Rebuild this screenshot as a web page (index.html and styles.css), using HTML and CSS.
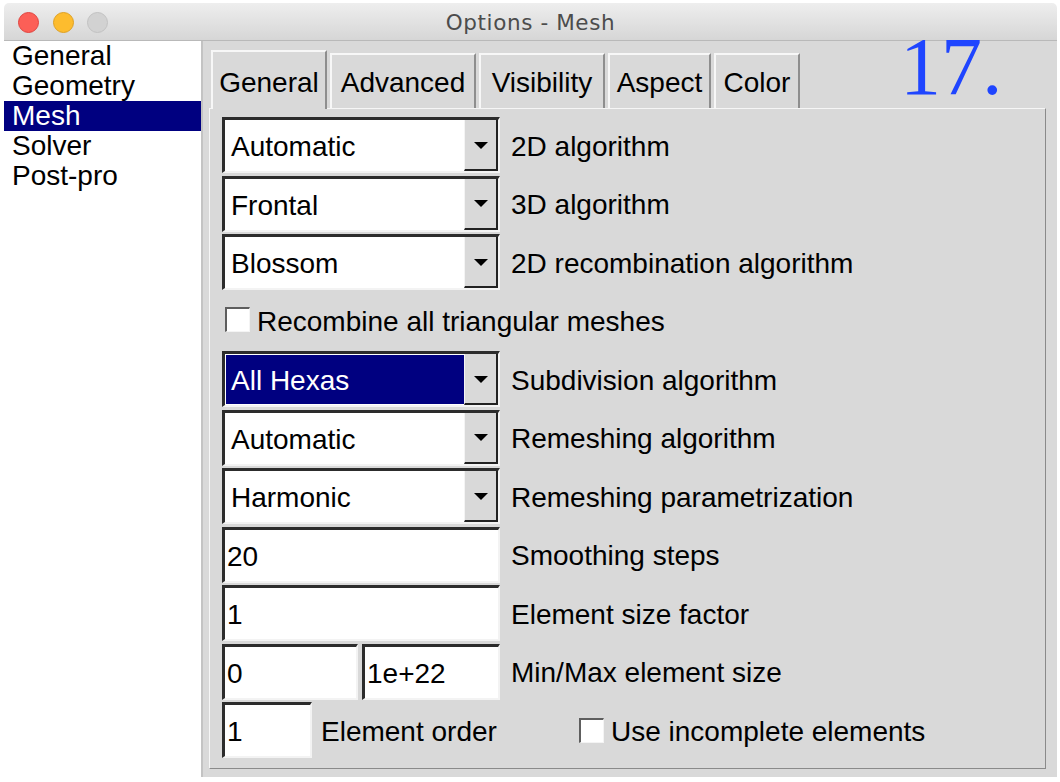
FILE: index.html
```html
<!DOCTYPE html>
<html>
<head>
<meta charset="utf-8">
<link rel="stylesheet" href="styles.css">
</head>
<body>
<div class="window">
  <div class="titlebar">
    <div class="lights">
      <span class="light red"></span>
      <span class="light yellow"></span>
      <span class="light gray"></span>
    </div>
    <div class="title">Options - Mesh</div>
    <div></div>
  </div>
  <div class="content">
    <ul class="sidebar">
      <li>General</li>
      <li>Geometry</li>
      <li class="selected">Mesh</li>
      <li>Solver</li>
      <li>Post-pro</li>
    </ul>
    <div class="main">
      <div class="tabs">
        <div class="tab active t-general">General</div>
        <div class="tab t-advanced">Advanced</div>
        <div class="tab t-visibility">Visibility</div>
        <div class="tab t-aspect">Aspect</div>
        <div class="tab t-color">Color</div>
      </div>
      <div class="panel">
        <div class="row">
          <div class="field choice"><span class="value">Automatic</span><span class="btn"><svg width="14" height="8" viewBox="0 0 14 8"><polygon points="0,0 14,0 7,7" fill="#000"/></svg></span></div>
          <span class="label">2D algorithm</span>
        </div>
        <div class="row">
          <div class="field choice"><span class="value">Frontal</span><span class="btn"><svg width="14" height="8" viewBox="0 0 14 8"><polygon points="0,0 14,0 7,7" fill="#000"/></svg></span></div>
          <span class="label">3D algorithm</span>
        </div>
        <div class="row">
          <div class="field choice"><span class="value">Blossom</span><span class="btn"><svg width="14" height="8" viewBox="0 0 14 8"><polygon points="0,0 14,0 7,7" fill="#000"/></svg></span></div>
          <span class="label">2D recombination algorithm</span>
        </div>
        <div class="row">
          <span class="check first"></span>
          <span class="check-label">Recombine all triangular meshes</span>
        </div>
        <div class="row">
          <div class="field choice"><span class="value selected-value">All Hexas</span><span class="btn"><svg width="14" height="8" viewBox="0 0 14 8"><polygon points="0,0 14,0 7,7" fill="#000"/></svg></span></div>
          <span class="label">Subdivision algorithm</span>
        </div>
        <div class="row">
          <div class="field choice"><span class="value">Automatic</span><span class="btn"><svg width="14" height="8" viewBox="0 0 14 8"><polygon points="0,0 14,0 7,7" fill="#000"/></svg></span></div>
          <span class="label">Remeshing algorithm</span>
        </div>
        <div class="row">
          <div class="field choice"><span class="value">Harmonic</span><span class="btn"><svg width="14" height="8" viewBox="0 0 14 8"><polygon points="0,0 14,0 7,7" fill="#000"/></svg></span></div>
          <span class="label">Remeshing parametrization</span>
        </div>
        <div class="row">
          <div class="field input">20</div>
          <span class="label">Smoothing steps</span>
        </div>
        <div class="row">
          <div class="field input">1</div>
          <span class="label">Element size factor</span>
        </div>
        <div class="row">
          <div class="field input min">0</div>
          <div class="field input max">1e+22</div>
          <span class="label">Min/Max element size</span>
        </div>
        <div class="row">
          <div class="field input order">1</div>
          <span class="label order-label">Element order</span>
          <span class="check"></span>
          <span class="check-label">Use incomplete elements</span>
        </div>
      </div>
    </div>
  </div>
</div>
<div class="stamp">17.</div>
</body>
</html>
```

FILE: styles.css
```css
html, body {
  margin: 0;
  padding: 0;
}
body {
  width: 1060px;
  height: 782px;
  overflow: hidden;
  background: #ffffff;
  font-family: "Liberation Sans", Arial, sans-serif;
  color: #000;
  position: relative;
}
.window {
  margin: 3px 3px 0 4px;
  height: 774px;
  display: flex;
  flex-direction: column;
}
.titlebar {
  height: 37px;
  flex: none;
  border-bottom: 1px solid #b9b9b9;
  border-radius: 5px 5px 0 0;
  background: linear-gradient(#eeeeee, #d6d6d6);
  display: grid;
  grid-template-columns: 1fr auto 1fr;
  align-items: center;
}
.lights {
  display: flex;
  gap: 13.5px;
  padding-left: 14px;
  padding-top: 1px;
}
.light {
  width: 21px;
  height: 21px;
  border-radius: 50%;
  box-sizing: border-box;
}
.light.red { background: #fc5f57; border: 1px solid #e1443f; }
.light.yellow { background: #fdbc2e; border: 1px solid #dea123; }
.light.gray { background: #d2d2d2; border: 1px solid #c2c2c2; }
.title {
  font-family: "DejaVu Sans", sans-serif;
  font-size: 21.5px;
  color: #4c4c4c;
  letter-spacing: 0.6px;
  padding-top: 1px;
}
.content {
  flex: 1;
  display: flex;
}
.sidebar {
  list-style: none;
  margin: 0;
  padding: 0;
  width: 197px;
  background: #fff;
}
.sidebar li {
  height: 30px;
  line-height: 30px;
  font-size: 28px;
  padding-left: 8px;
}
.sidebar li.selected {
  background: #000080;
  color: #fff;
}
.main {
  flex: 1;
  background: #d9d9d9;
  border-left: 2px solid #c3c3c3;
  padding: 9px 11px 0 6px;
}
.tabs {
  display: flex;
  align-items: flex-end;
  gap: 3px;
  margin-left: 2px;
  height: 58px;
}
.tab {
  box-sizing: border-box;
  height: 55px;
  border-style: solid;
  border-width: 2px 2px 0 2px;
  border-color: #f7f7f7 #8e8e8e transparent #f7f7f7;
  font-size: 28px;
  line-height: 30px;
  padding-top: 13px;
  text-align: center;
  background: #d9d9d9;
}
.tab.active {
  height: 59px;
  padding-top: 16px;
  margin-bottom: -1px;
  position: relative;
  z-index: 1;
}
.t-general { width: 116px; }
.t-advanced { width: 146px; }
.t-visibility { width: 126px; }
.t-aspect { width: 103px; }
.t-color { width: 86px; }
.panel {
  height: 661px;
  box-sizing: border-box;
  border: 1px solid;
  border-color: #f6f6f6 #8a8a8a #8a8a8a #f6f6f6;
  padding: 8px 12px 0 12px;
  display: flex;
  flex-direction: column;
  gap: 2.5px;
}
.row {
  height: 56px;
  display: flex;
  align-items: center;
  font-size: 28px;
}
.field {
  height: 56px;
  width: 278px;
  box-sizing: border-box;
  background: #fff;
  border-style: solid;
  border-width: 3px 2px 2px 3px;
  border-color: #2c2c2c #f3f3f3 #f3f3f3 #2c2c2c;
  display: flex;
  align-items: center;
}
.input {
  padding-left: 2px;
  padding-top: 3px;
}
.input.min { width: 136px; }
.input.max { width: 138px; margin-left: 4px; }
.input.order { width: 90px; }
.choice .value {
  flex: 1;
  align-self: stretch;
  display: flex;
  align-items: center;
  padding-left: 6px;
  padding-top: 3px;
}
.choice .value.selected-value {
  background: #000080;
  color: #fff;
  margin: 1px 0 1px 1px;
  padding-left: 5px;
}
.choice .btn {
  width: 34px;
  align-self: stretch;
  box-sizing: border-box;
  background: #d9d9d9;
  border-left: 1px solid #f4f4f4;
  border-right: 2px solid #222;
  border-bottom: 2px solid #222;
  display: flex;
  align-items: center;
  justify-content: center;
  padding-top: 2px;
}
.label {
  margin-left: 11px;
  padding-top: 3px;
}
.order-label {
  margin-left: 9px;
  width: 258px;
}
.check {
  width: 25px;
  height: 25px;
  box-sizing: border-box;
  background: #fff;
  border-style: solid;
  border-width: 2px 1px 1px 2px;
  border-color: #5e5e5e #f4f4f4 #f4f4f4 #5e5e5e;
  flex: none;
}
.check.first {
  margin-left: 3px;
  margin-top: -2px;
}
.check-label {
  margin-left: 7px;
  padding-top: 3px;
}
.stamp {
  position: absolute;
  left: 900px;
  top: 26px;
  font-family: "Liberation Serif", "Times New Roman", serif;
  font-size: 82px;
  line-height: 82px;
  color: #1f45ff;
}
```
